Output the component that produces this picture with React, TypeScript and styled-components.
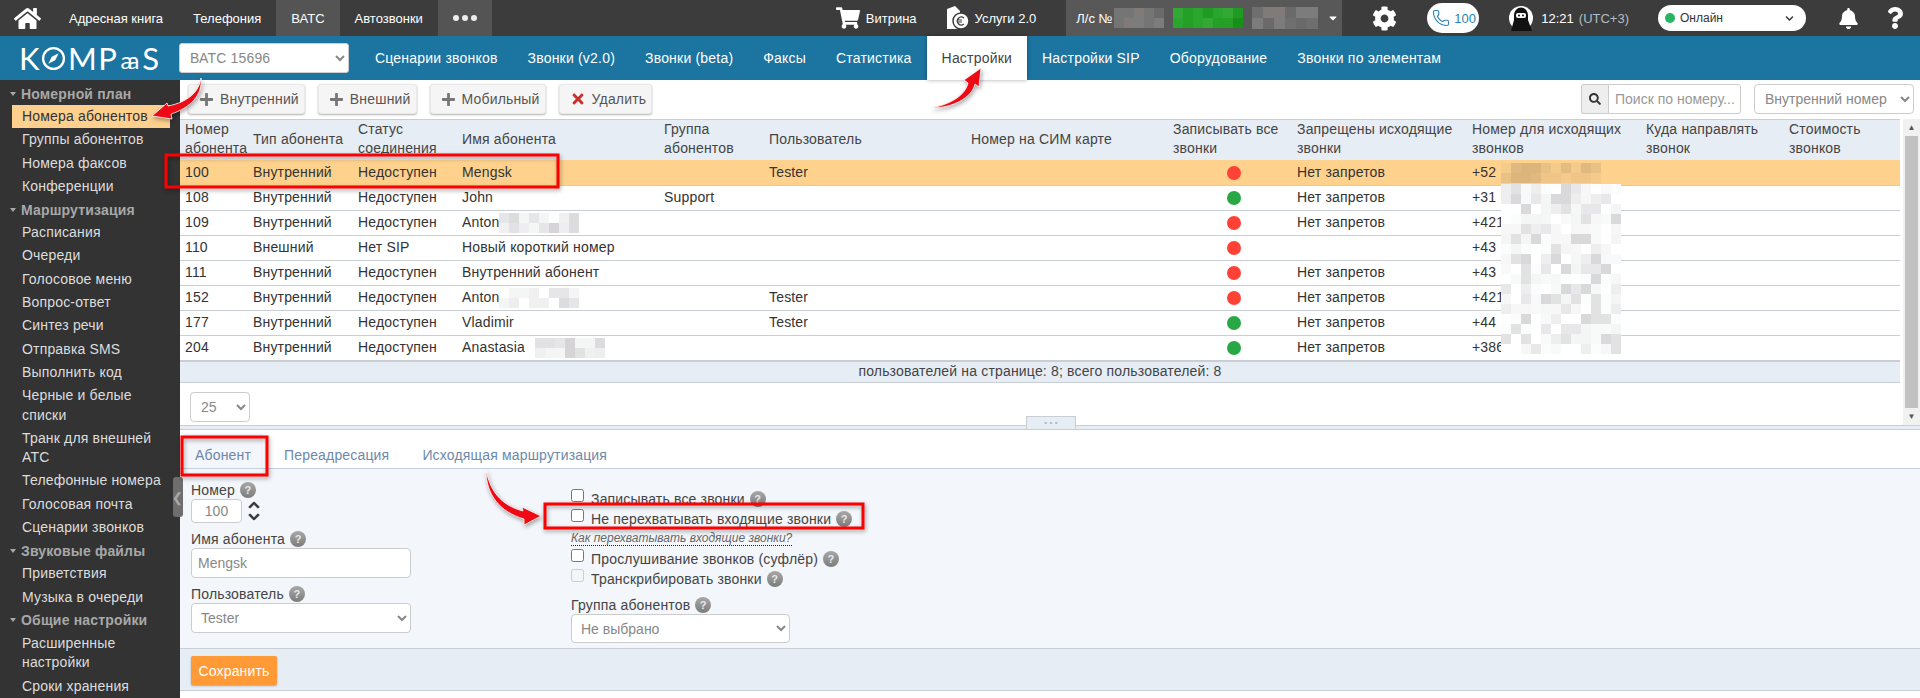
import React from "react";
import styled, { createGlobalStyle } from "styled-components";
import { Phone } from "lucide-react";
import {
  FaBell,
  FaCaretDown,
  FaChevronDown,
  FaChevronUp,
  FaCog,
  FaHome,
  FaPlus,
  FaQuestion,
  FaSearch,
  FaShoppingCart,
  FaTimes,
} from "react-icons/fa";

const GlobalStyle = createGlobalStyle`
  html, body {
    margin: 0;
    padding: 0;
    background: #fff;
  }
  body {
    font-family: "Liberation Sans", Arial, sans-serif;
    font-size: 14px;
    letter-spacing: 0.17px;
    color: #333;
  }
  * {
    box-sizing: border-box;
  }
`;

interface Subscriber {
  id: string;
  type: string;
  status: string;
  name: string;
  blur?: [number, number];
  group?: string;
  user?: string;
  record: boolean;
  ban: boolean;
  phone: string;
}

const subscribers: Subscriber[] = [
  { id: "100", type: "Внутренний", status: "Недоступен", name: "Mengsk", user: "Tester", record: false, ban: true, phone: "+52" },
  { id: "108", type: "Внутренний", status: "Недоступен", name: "John", group: "Support", record: true, ban: true, phone: "+31" },
  { id: "109", type: "Внутренний", status: "Недоступен", name: "Anton", blur: [8, 2], record: false, ban: true, phone: "+421" },
  { id: "110", type: "Внешний", status: "Нет SIP", name: "Новый короткий номер", record: false, ban: false, phone: "+43" },
  { id: "111", type: "Внутренний", status: "Недоступен", name: "Внутренний абонент", record: false, ban: true, phone: "+43" },
  { id: "152", type: "Внутренний", status: "Недоступен", name: "Anton", blur: [8, 2], user: "Tester", record: false, ban: true, phone: "+421" },
  { id: "177", type: "Внутренний", status: "Недоступен", name: "Vladimir", user: "Tester", record: true, ban: true, phone: "+44" },
  { id: "204", type: "Внутренний", status: "Недоступен", name: "Anastasia", blur: [8, 2], record: true, ban: true, phone: "+386" },
];

const columns = [68, 105, 104, 202, 105, 202, 202, 124, 175, 174, 143, 116];

const headers = [
  "Номер абонента",
  "Тип абонента",
  "Статус соединения",
  "Имя абонента",
  "Группа абонентов",
  "Пользователь",
  "Номер на СИМ карте",
  "Записывать все звонки",
  "Запрещены исходящие звонки",
  "Номер для исходящих звонков",
  "Куда направлять звонок",
  "Стоимость звонков",
];

const sideMenu: { title: string; items: string[] }[] = [
  { title: "Номерной план", items: ["Номера абонентов", "Группы абонентов", "Номера факсов", "Конференции"] },
  {
    title: "Маршрутизация",
    items: [
      "Расписания",
      "Очереди",
      "Голосовое меню",
      "Вопрос-ответ",
      "Синтез речи",
      "Отправка SMS",
      "Выполнить код",
      "Черные и белые списки",
      "Транк для внешней АТС",
      "Телефонные номера",
      "Голосовая почта",
      "Сценарии звонков",
    ],
  },
  { title: "Звуковые файлы", items: ["Приветствия", "Музыка в очереди"] },
  { title: "Общие настройки", items: ["Расширенные настройки", "Сроки хранения"] },
];

const blueNav = [
  "Сценарии звонков",
  "Звонки (v2.0)",
  "Звонки (beta)",
  "Факсы",
  "Статистика",
  "Настройки",
  "Настройки SIP",
  "Оборудование",
  "Звонки по элементам",
];

// pixelated patches that hide personal data in the screenshot
const Mosaic: React.FC<{
  cols: number;
  rows: number;
  cell?: number;
  seed?: number;
  colors: string[];
  x?: number;
  y?: number;
}> = ({ cols, rows, cell = 10, seed = 7, colors, x, y }) => {
  let s = seed;
  const next = () => {
    s = (s * 9301 + 49297) % 233280;
    return s / 233280;
  };
  const rects: React.ReactNode[] = [];
  for (let r = 0; r < rows; r++) {
    for (let c = 0; c < cols; c++) {
      rects.push(
        <rect
          key={`${r}-${c}`}
          x={c * cell}
          y={r * cell}
          width={cell}
          height={cell}
          fill={colors[Math.floor(next() * colors.length)]}
        />
      );
    }
  }
  return (
    <MosaicSvg $x={x} $y={y} width={cols * cell} height={rows * cell} shapeRendering="crispEdges">
      {rects}
    </MosaicSvg>
  );
};

const greys = ["#6f6f6f", "#757575", "#7c7c7c", "#6a6a6a", "#807a78"];
const greens = ["#1f9a22", "#2aa52d", "#169018", "#33a835", "#25a027"];
const pale = ["#ffffff", "#f4f5f5", "#eeeef0", "#e6e6e8", "#dcdcde", "#d6d4d6", "#f0f0f0", "#e2e2e4"];
const palest = ["#ffffff", "#fbfcfc", "#f8f9f9", "#f4f5f5", "#eeeeef", "#e8e8ea", "#e2e2e3", "#d9d8da", "#f6f7f6", "#ffffff"];
const tinted = ["#e3bd80", "#dfb97f", "#e8c184", "#f4cb8a", "#dcb57c", "#efc688"];

const KompasLogo = () => (
  <Logo>
    K
    <svg width="25" height="25" viewBox="0 0 24 24">
      <circle cx="12" cy="12" r="10" fill="none" stroke="#fff" strokeWidth="2.2" />
      <path d="M17 7 L13.6 13.6 L7 17 L10.4 10.4 Z" fill="#fff" />
    </svg>
    MP
    <LogoSmall>aa</LogoSmall>
    S
  </Logo>
);

const ServicesIcon = () => (
  <svg width="24" height="26" viewBox="0 0 24 26">
    <path d="M2 4 L10 1 L15 6 L15 24 L2 24 Z" fill="#fff" />
    <circle cx="16" cy="16" r="8" fill="#fff" stroke="#3c3c3c" strokeWidth="1.5" />
    <path d="M19 13 a4 4 0 1 0 0 6 M12 15 h5 M12 17 h5" fill="none" stroke="#3c3c3c" strokeWidth="1.2" />
  </svg>
);

const NinjaAvatar = () => (
  <svg width="24" height="26" viewBox="0 0 24 26">
    <circle cx="12" cy="13" r="12" fill="#fff" />
    <path d="M5 10 a7 7.5 0 0 1 14 0 L19 15 L23 26 L2 26 L5 15 Z" fill="#111" />
    <rect x="7" y="8" width="10" height="5" rx="2" fill="#fff" />
    <circle cx="10" cy="10.5" r="1" fill="#111" />
    <circle cx="14" cy="10.5" r="1" fill="#111" />
  </svg>
);

const Help = () => <HelpBadge>?</HelpBadge>;

const App: React.FC = () => {
  return (
    <Page>
      <GlobalStyle />
      <TopBar>
        <HomeLink>
          <FaHome size={27} />
        </HomeLink>
        <TopItem>Адресная книга</TopItem>
        <TopItem>Телефония</TopItem>
        <TopItem $active>ВАТС</TopItem>
        <TopItem>Автозвонки</TopItem>
        <TopItem $active>
          <Dots>
            <i />
            <i />
            <i />
          </Dots>
        </TopItem>
        <TopRight>
          <TopLink $gap={28}>
            <FaShoppingCart size={24} />
            Витрина
          </TopLink>
          <TopLink $gap={30}>
            <ServicesIcon />
            Услуги 2.0
          </TopLink>
          <Account>
            Л/с №
            <Mosaic cols={5} rows={2} colors={greys} seed={3} />
            <Mosaic cols={7} rows={2} colors={greens} seed={11} />
            <Mosaic cols={6} rows={2} cell={11} colors={greys} seed={23} />
            <FaCaretDown size={12} />
          </Account>
          <GearLink>
            <FaCog size={25} />
          </GearLink>
          <PhonePill>
            <Phone size={18} strokeWidth={1.5} />
            100
          </PhonePill>
          <Clock>
            <NinjaAvatar />
            12:21 <small>(UTC+3)</small>
          </Clock>
          <StatusPill>
            <StatusDot />
            Онлайн
            <FaChevronDown size={9} />
          </StatusPill>
          <BellLink>
            <FaBell size={21} />
          </BellLink>
          <HelpLink>
            <FaQuestion size={22} />
          </HelpLink>
        </TopRight>
      </TopBar>

      <BlueBar>
        <KompasLogo />
        <VatsSelect defaultValue="ВАТС 15696">
          <option>ВАТС 15696</option>
        </VatsSelect>
        <BlueNav>
          {blueNav.map((item) => (
            <BlueItem key={item} $active={item === "Настройки"}>
              {item}
            </BlueItem>
          ))}
        </BlueNav>
      </BlueBar>

      <Body>
        <Sidebar>
          {sideMenu.map((section) => (
            <div key={section.title}>
              <SectionTitle>
                <SectionCaret />
                {section.title}
              </SectionTitle>
              {section.items.map((item) => (
                <SideItem key={item} $active={item === "Номера абонентов"}>
                  {item}
                </SideItem>
              ))}
            </div>
          ))}
          <Collapse>❮</Collapse>
        </Sidebar>

        <Main>
          <Toolbar>
            <ToolButton>
              <FaPlus size={15} color="#777" />
              Внутренний
            </ToolButton>
            <ToolButton>
              <FaPlus size={15} color="#777" />
              Внешний
            </ToolButton>
            <ToolButton>
              <FaPlus size={15} color="#777" />
              Мобильный
            </ToolButton>
            <ToolButton>
              <FaTimes size={16} color="#c9302c" />
              Удалить
            </ToolButton>
            <SearchGroup>
              <SearchAddon>
                <FaSearch size={12} />
              </SearchAddon>
              <SearchInput placeholder="Поиск по номеру..." />
            </SearchGroup>
            <SearchSelect defaultValue="Внутренний номер">
              <option>Внутренний номер</option>
            </SearchSelect>
          </Toolbar>

          <TableArea>
            <TablePane>
              <Table>
                <colgroup>
                  {columns.map((width, index) => (
                    <col key={index} width={width} />
                  ))}
                </colgroup>
                <thead>
                  <tr>
                    {headers.map((title) => (
                      <HeadCell key={title}>{title}</HeadCell>
                    ))}
                  </tr>
                </thead>
                <tbody>
                  {subscribers.map((row, index) => (
                    <Row key={row.id} $selected={index === 0}>
                      <Cell>{row.id}</Cell>
                      <Cell>{row.type}</Cell>
                      <Cell>{row.status}</Cell>
                      <Cell>
                        <NameWrap>
                          {row.name}
                          {row.blur && <Mosaic cols={row.blur[0]} rows={row.blur[1]} seed={index * 13 + 5} colors={pale} />}
                        </NameWrap>
                      </Cell>
                      <Cell>{row.group}</Cell>
                      <Cell>{row.user}</Cell>
                      <Cell />
                      <DotCell>
                        <RecordDot $on={row.record} />
                      </DotCell>
                      <Cell>{row.ban ? "Нет запретов" : ""}</Cell>
                      <Cell>{row.phone}</Cell>
                      <Cell />
                      <Cell />
                    </Row>
                  ))}
                </tbody>
              </Table>
              <TableFooter>пользователей на странице: 8; всего пользователей: 8</TableFooter>
              <Pager>
                <PageSelect defaultValue="25">
                  <option>25</option>
                </PageSelect>
              </Pager>
            </TablePane>
            <ScrollTrack>
              <ScrollArrow>▲</ScrollArrow>
              <ScrollThumb />
              <ScrollArrow>▼</ScrollArrow>
            </ScrollTrack>
          </TableArea>

          <Splitter>
            <SplitterHandle>• • •</SplitterHandle>
          </Splitter>

          <Tabs>
            <Tab $active>Абонент</Tab>
            <Tab>Переадресация</Tab>
            <Tab>Исходящая маршрутизация</Tab>
          </Tabs>

          <FormPanel>
            <LeftColumn>
              <FieldLabel>
                Номер <Help />
              </FieldLabel>
              <NumberRow>
                <NumberInput defaultValue="100" readOnly />
                <Stepper>
                  <FaChevronUp size={12} />
                  <FaChevronDown size={12} />
                </Stepper>
              </NumberRow>
              <FieldLabel $top={6}>
                Имя абонента <Help />
              </FieldLabel>
              <TextInput defaultValue="Mengsk" readOnly />
              <FieldLabel $top={6}>
                Пользователь <Help />
              </FieldLabel>
              <FormSelect defaultValue="Tester">
                <option>Tester</option>
              </FormSelect>
            </LeftColumn>
            <RightColumn>
              <CheckRow>
                <input type="checkbox" />
                Записывать все звонки <Help />
              </CheckRow>
              <CheckRow>
                <input type="checkbox" />
                Не перехватывать входящие звонки <Help />
              </CheckRow>
              <HintRow>
                <HintLink>Как перехватывать входящие звонки?</HintLink>
              </HintRow>
              <CheckRow>
                <input type="checkbox" />
                Прослушивание звонков (суфлёр) <Help />
              </CheckRow>
              <CheckRow>
                <input type="checkbox" disabled />
                Транскрибировать звонки <Help />
              </CheckRow>
              <FieldLabel $top={6}>
                Группа абонентов <Help />
              </FieldLabel>
              <GroupSelect defaultValue="Не выбрано">
                <option>Не выбрано</option>
              </GroupSelect>
            </RightColumn>
          </FormPanel>

          <FormFooter>
            <SaveButton>Сохранить</SaveButton>
          </FormFooter>
        </Main>
      </Body>

      <Mosaic x={1501} y={163} cols={10} rows={2} seed={9} colors={tinted} />
      <Mosaic x={1501} y={184} cols={12} rows={17} seed={31} colors={palest} />

      <Marks width="1920" height="698" viewBox="0 0 1920 698">
        <g fill="none" stroke="#f00" strokeWidth="3">
          <rect x="166" y="155" width="392" height="32" />
          <rect x="182" y="437" width="85" height="38" />
          <rect x="545" y="504" width="318" height="24" />
        </g>
        <g fill="#ee0a14" stroke="#fff" strokeWidth="0.8">
          <path d="M201 78 C199 92 188 102 168 106 L167 103 L152 116 L172 119 L171 114 C190 108 203 95 201 78 Z" />
          <path d="M932 108 C950 104 965 96 968 83 L964 80 L981 68 L979 87 L975 84 C972 98 952 108 932 108 Z" />
          <path d="M486 470 C490 490 500 505 523 511 L522 507 L541 516 L524 525 L524 519 C500 512 486 495 486 470 Z" />
        </g>
      </Marks>
    </Page>
  );
};

export default App;

const Page = styled.div`
  position: relative;
  width: 1920px;
  height: 698px;
  overflow: hidden;
`;

const MosaicSvg = styled.svg<{ $x?: number; $y?: number }>`
  flex: none;
  display: block;
  ${(p) => (p.$x !== undefined ? `position: absolute; left: ${p.$x}px; top: ${p.$y}px;` : "")}
`;

const Marks = styled.svg`
  position: absolute;
  left: 0;
  top: 0;
  pointer-events: none;
  filter: drop-shadow(1px 2px 2px rgba(0, 0, 0, 0.35));
`;

const TopBar = styled.header`
  display: flex;
  align-items: stretch;
  height: 36px;
  background: #3c3c3c;
  color: #fff;
  font-size: 13px;
  letter-spacing: 0;
`;

const HomeLink = styled.div`
  display: flex;
  align-items: center;
  justify-content: center;
  width: 54px;
`;

const TopItem = styled.div<{ $active?: boolean }>`
  display: flex;
  align-items: center;
  padding: 0 15px;
  background: ${(p) => (p.$active ? "#545454" : "transparent")};
`;

const Dots = styled.span`
  display: flex;
  gap: 3px;

  i {
    width: 6px;
    height: 6px;
    border-radius: 50%;
    background: #eee;
  }
`;

const TopRight = styled.div`
  display: flex;
  align-items: center;
  margin-left: auto;
  padding-right: 14px;
`;

const TopLink = styled.div<{ $gap: number }>`
  display: flex;
  align-items: center;
  gap: 6px;
  margin-right: ${(p) => p.$gap}px;
`;

const Account = styled.div`
  display: flex;
  align-items: center;
  gap: 9px;
  align-self: stretch;
  width: 276px;
  padding: 0 10px;
  background: #585858;
  white-space: nowrap;

  svg:first-of-type {
    margin-left: -7px;
  }

  svg:last-child {
    flex: none;
    margin-left: auto;
  }
`;

const GearLink = styled.div`
  display: flex;
  margin-left: 30px;
`;

const PhonePill = styled.div`
  display: flex;
  align-items: center;
  gap: 4px;
  width: 52px;
  height: 30px;
  margin-left: 30px;
  padding-left: 5px;
  border-radius: 15px;
  background: #fff;
  color: #2a84b8;
  font-size: 13px;
  white-space: nowrap;
`;

const Clock = styled.div`
  display: flex;
  align-items: center;
  gap: 8px;
  margin-left: 30px;
  font-size: 13px;

  small {
    margin-left: -3px;
    color: #b4bcc4;
    font-size: 13px;
  }
`;

const StatusPill = styled.div`
  display: flex;
  align-items: center;
  gap: 5px;
  width: 148px;
  height: 26px;
  margin-left: 29px;
  padding: 0 12px 0 7px;
  border-radius: 13px;
  background: #fff;
  color: #333;
  font-size: 12px;

  svg {
    margin-left: auto;
  }
`;

const StatusDot = styled.span`
  width: 10px;
  height: 10px;
  border-radius: 50%;
  background: #28b463;
`;

const BellLink = styled.div`
  display: flex;
  margin-left: 32px;
`;

const HelpLink = styled.div`
  display: flex;
  margin-left: 25px;
`;

const BlueBar = styled.div`
  display: flex;
  align-items: center;
  height: 44px;
  background: #1c74a0;
`;

const Logo = styled.div`
  display: flex;
  align-items: center;
  width: 179px;
  padding-left: 19px;
  color: #fff;
  font-family: Lato, "Liberation Sans", sans-serif;
  font-size: 31px;
  font-weight: 400;
  letter-spacing: 1.5px;
  line-height: 1;

  svg {
    margin: 0 2px 0 0;
  }
`;

const LogoSmall = styled.span`
  margin: 3px 0 0 2px;
  padding-right: 8px;
  font-size: 24px;
  letter-spacing: -5px;
`;

const VatsSelect = styled.select`
  width: 170px;
  height: 30px;
  padding: 0 6px;
  border: 1px solid #ccc;
  border-radius: 3px;
  background: #fff;
  color: #888;
  font: inherit;
  letter-spacing: inherit;
`;

const BlueNav = styled.nav`
  display: flex;
  align-self: stretch;
  margin-left: 11px;
`;

const BlueItem = styled.div<{ $active?: boolean }>`
  display: flex;
  align-items: center;
  padding: 0 15px;
  letter-spacing: 0.2px;
  color: ${(p) => (p.$active ? "#444" : "#fff")};
  background: ${(p) => (p.$active ? "#fff" : "transparent")};
  box-shadow: ${(p) => (p.$active ? "0 0 4px rgba(0, 0, 0, 0.35)" : "none")};
`;

const Body = styled.div`
  display: flex;
  height: 618px;
`;

const Sidebar = styled.aside`
  position: relative;
  flex: none;
  width: 180px;
  padding-top: 2px;
  background: #333;
  color: #ddd;
`;

const SectionTitle = styled.div`
  display: flex;
  align-items: center;
  height: 23px;
  color: #a8a8a8;
  font-weight: 700;
`;

const SectionCaret = styled.span`
  width: 0;
  height: 0;
  margin: 0 5px 0 10px;
  border: 3px solid transparent;
  border-top: 4px solid #a8a8a8;
  border-bottom: 0;
`;

const SideItem = styled.div<{ $active?: boolean }>`
  width: 158px;
  margin-left: 12px;
  padding: 2px 4px 2px 10px;
  line-height: 19.3px;
  background: ${(p) => (p.$active ? "#fdd08e" : "transparent")};
  color: ${(p) => (p.$active ? "#333" : "#ddd")};
`;

const Collapse = styled.div`
  position: absolute;
  left: 173px;
  top: 397px;
  display: flex;
  align-items: center;
  justify-content: center;
  width: 10px;
  height: 40px;
  border-radius: 3px;
  background: #6e6e6e;
  color: #aaa;
  font-size: 13px;
`;

const Main = styled.main`
  flex: 1;
  min-width: 0;
`;

const Toolbar = styled.div`
  display: flex;
  align-items: flex-start;
  gap: 13px;
  height: 39px;
  padding: 4px 6px 0 8px;
`;

const ToolButton = styled.button`
  display: flex;
  align-items: center;
  gap: 6px;
  height: 30px;
  padding: 0 5px 0 10px;
  border: 1px solid #e8e8e8;
  border-radius: 3px;
  background: #f5f5f5;
  box-shadow: 0 1px 2px rgba(0, 0, 0, 0.3);
  color: #555;
  font: inherit;
  letter-spacing: inherit;
`;

const SearchGroup = styled.div`
  display: flex;
  margin-left: auto;
`;

const SearchAddon = styled.span`
  display: flex;
  align-items: center;
  justify-content: center;
  width: 27px;
  height: 30px;
  border: 1px solid #ccc;
  border-right: 0;
  border-radius: 3px 0 0 3px;
  background: #eee;
  color: #333;
`;

const SearchInput = styled.input`
  width: 133px;
  height: 30px;
  padding: 0 6px;
  border: 1px solid #ccc;
  border-radius: 0 3px 3px 0;
  color: #666;
  font: inherit;

  &::placeholder {
    color: #999;
  }
`;

const SearchSelect = styled.select`
  width: 160px;
  height: 30px;
  padding: 0 6px;
  border: 1px solid #ccc;
  border-radius: 4px;
  background: #fff;
  color: #888;
  font: inherit;
`;

const TableArea = styled.div`
  display: flex;
  gap: 3px;
  height: 306px;
`;

const TablePane = styled.div`
  flex: none;
  width: 1720px;
`;

const Table = styled.table`
  width: 1720px;
  table-layout: fixed;
  border-collapse: collapse;
`;

const HeadCell = styled.th`
  height: 40px;
  padding: 0 5px 2px;
  border-top: 1px solid #c9ced4;
  background: #e6edf4;
  color: #444;
  font-weight: 400;
  line-height: 19px;
  text-align: left;
  overflow: hidden;
`;

const Row = styled.tr<{ $selected?: boolean }>`
  height: 25px;
  border-bottom: 1px solid #c9ced4;
  background: ${(p) => (p.$selected ? "#fed28d" : "#fff")};
`;

const Cell = styled.td`
  padding: 0 5px;
  color: #333;
  line-height: 19px;
  white-space: nowrap;
`;

const NameWrap = styled.div`
  display: flex;
  align-items: center;
  height: 19px;
`;

const DotCell = styled.td`
  padding-left: 8px;
  text-align: center;
`;

const RecordDot = styled.span<{ $on: boolean }>`
  display: inline-block;
  width: 14px;
  height: 14px;
  margin-top: 4px;
  border-radius: 50%;
  background: ${(p) => (p.$on ? "#28a745" : "#ff4136")};
`;

const TableFooter = styled.div`
  height: 22px;
  border-top: 1px solid #c9ced4;
  border-bottom: 1px solid #c9ced4;
  background: #e6edf4;
  color: #444;
  line-height: 19px;
  text-align: center;
`;

const Pager = styled.div`
  padding: 9px 0 0 10px;
`;

const PageSelect = styled.select`
  width: 60px;
  height: 30px;
  padding: 0 6px;
  border: 1px solid #ccc;
  border-radius: 4px;
  background: #fff;
  color: #888;
  font: inherit;
`;

const ScrollTrack = styled.div`
  display: flex;
  flex: none;
  flex-direction: column;
  width: 17px;
  background: #f1f1f1;
`;

const ScrollArrow = styled.div`
  display: flex;
  flex: none;
  align-items: center;
  justify-content: center;
  height: 17px;
  color: #555;
  font-size: 8px;
`;

const ScrollThumb = styled.div`
  flex: 1;
  margin: 0 2px;
  background: #c1c1c1;
`;

const Splitter = styled.div`
  position: relative;
  height: 5px;
  border-top: 1px solid #c9ced4;
  border-bottom: 1px solid #c9ced4;
  background: #e6edf4;
`;

const SplitterHandle = styled.div`
  position: absolute;
  left: 846px;
  top: -10px;
  width: 50px;
  height: 13px;
  border: 1px solid #c9ced4;
  border-bottom: 0;
  background: #e6edf4;
  color: #a9b3bf;
  font-size: 8px;
  line-height: 12px;
  text-align: center;
`;

const Tabs = styled.div`
  display: flex;
  gap: 9px;
  height: 39px;
  padding: 4px 0 0 3px;
  border-bottom: 1px solid #c6d0dc;
`;

const Tab = styled.div<{ $active?: boolean }>`
  display: flex;
  align-items: center;
  padding: 7px 12px 0;
  background: ${(p) => (p.$active ? "#f3f6fa" : "transparent")};
  color: #6c88ac;
`;

const FormPanel = styled.div`
  display: flex;
  height: 180px;
  padding: 11px 0 0 11px;
  border-bottom: 1px solid #c9ced4;
  background: #f3f6fa;
  color: #444;
`;

const LeftColumn = styled.div`
  width: 220px;
`;

const RightColumn = styled.div`
  width: 330px;
  margin-left: 160px;
  padding-top: 9px;
`;

const FieldLabel = styled.div<{ $top?: number }>`
  display: flex;
  align-items: center;
  gap: 5px;
  height: 19px;
  margin-top: ${(p) => p.$top ?? 0}px;
`;

const HelpBadge = styled.span`
  display: inline-flex;
  align-items: center;
  justify-content: center;
  flex: none;
  width: 16px;
  height: 16px;
  border-radius: 50%;
  background: linear-gradient(#a8a8a8, #7c7c7c);
  color: #e8e8e8;
  font-size: 11px;
  font-weight: 700;
`;

const NumberRow = styled.div`
  display: flex;
  align-items: center;
  gap: 6px;
`;

const NumberInput = styled.input`
  width: 51px;
  height: 24px;
  border: 1px solid #ccc;
  border-radius: 4px;
  color: #888;
  font: inherit;
  text-align: center;
`;

const Stepper = styled.span`
  display: flex;
  flex-direction: column;
  color: #333;

  svg {
    stroke: currentColor;
    stroke-width: 30px;
  }
`;

const TextInput = styled.input`
  display: block;
  width: 220px;
  height: 30px;
  padding: 0 6px;
  border: 1px solid #ccc;
  border-radius: 4px;
  color: #888;
  font: inherit;
`;

const FormSelect = styled.select`
  display: block;
  width: 220px;
  height: 30px;
  padding: 0 5px;
  border: 1px solid #ccc;
  border-radius: 4px;
  background: #fff;
  color: #888;
  font: inherit;
`;

const GroupSelect = styled(FormSelect)`
  width: 219px;
  height: 29px;
`;

const CheckRow = styled.label`
  display: flex;
  align-items: center;
  gap: 5px;
  height: 20px;

  input {
    flex: none;
    align-self: flex-start;
    width: 13px;
    height: 13px;
    margin: 0 2px 0 0;
  }
`;

const HintRow = styled.div`
  height: 20px;
  line-height: 17px;
`;

const HintLink = styled.span`
  border-bottom: 1px dotted #222;
  color: #666;
  font-size: 12px;
  font-style: italic;
  letter-spacing: 0;
`;

const FormFooter = styled.div`
  height: 42px;
  padding: 7px 0 0 11px;
  border-bottom: 1px solid #c9ced4;
  background: #e6edf4;
`;

const SaveButton = styled.button`
  width: 86px;
  height: 29px;
  padding: 0;
  border: 0;
  border-radius: 2px;
  background: #ff9a36;
  box-shadow: 0 1px 2px rgba(0, 0, 0, 0.3);
  color: #fff;
  font: inherit;
  letter-spacing: inherit;
`;
